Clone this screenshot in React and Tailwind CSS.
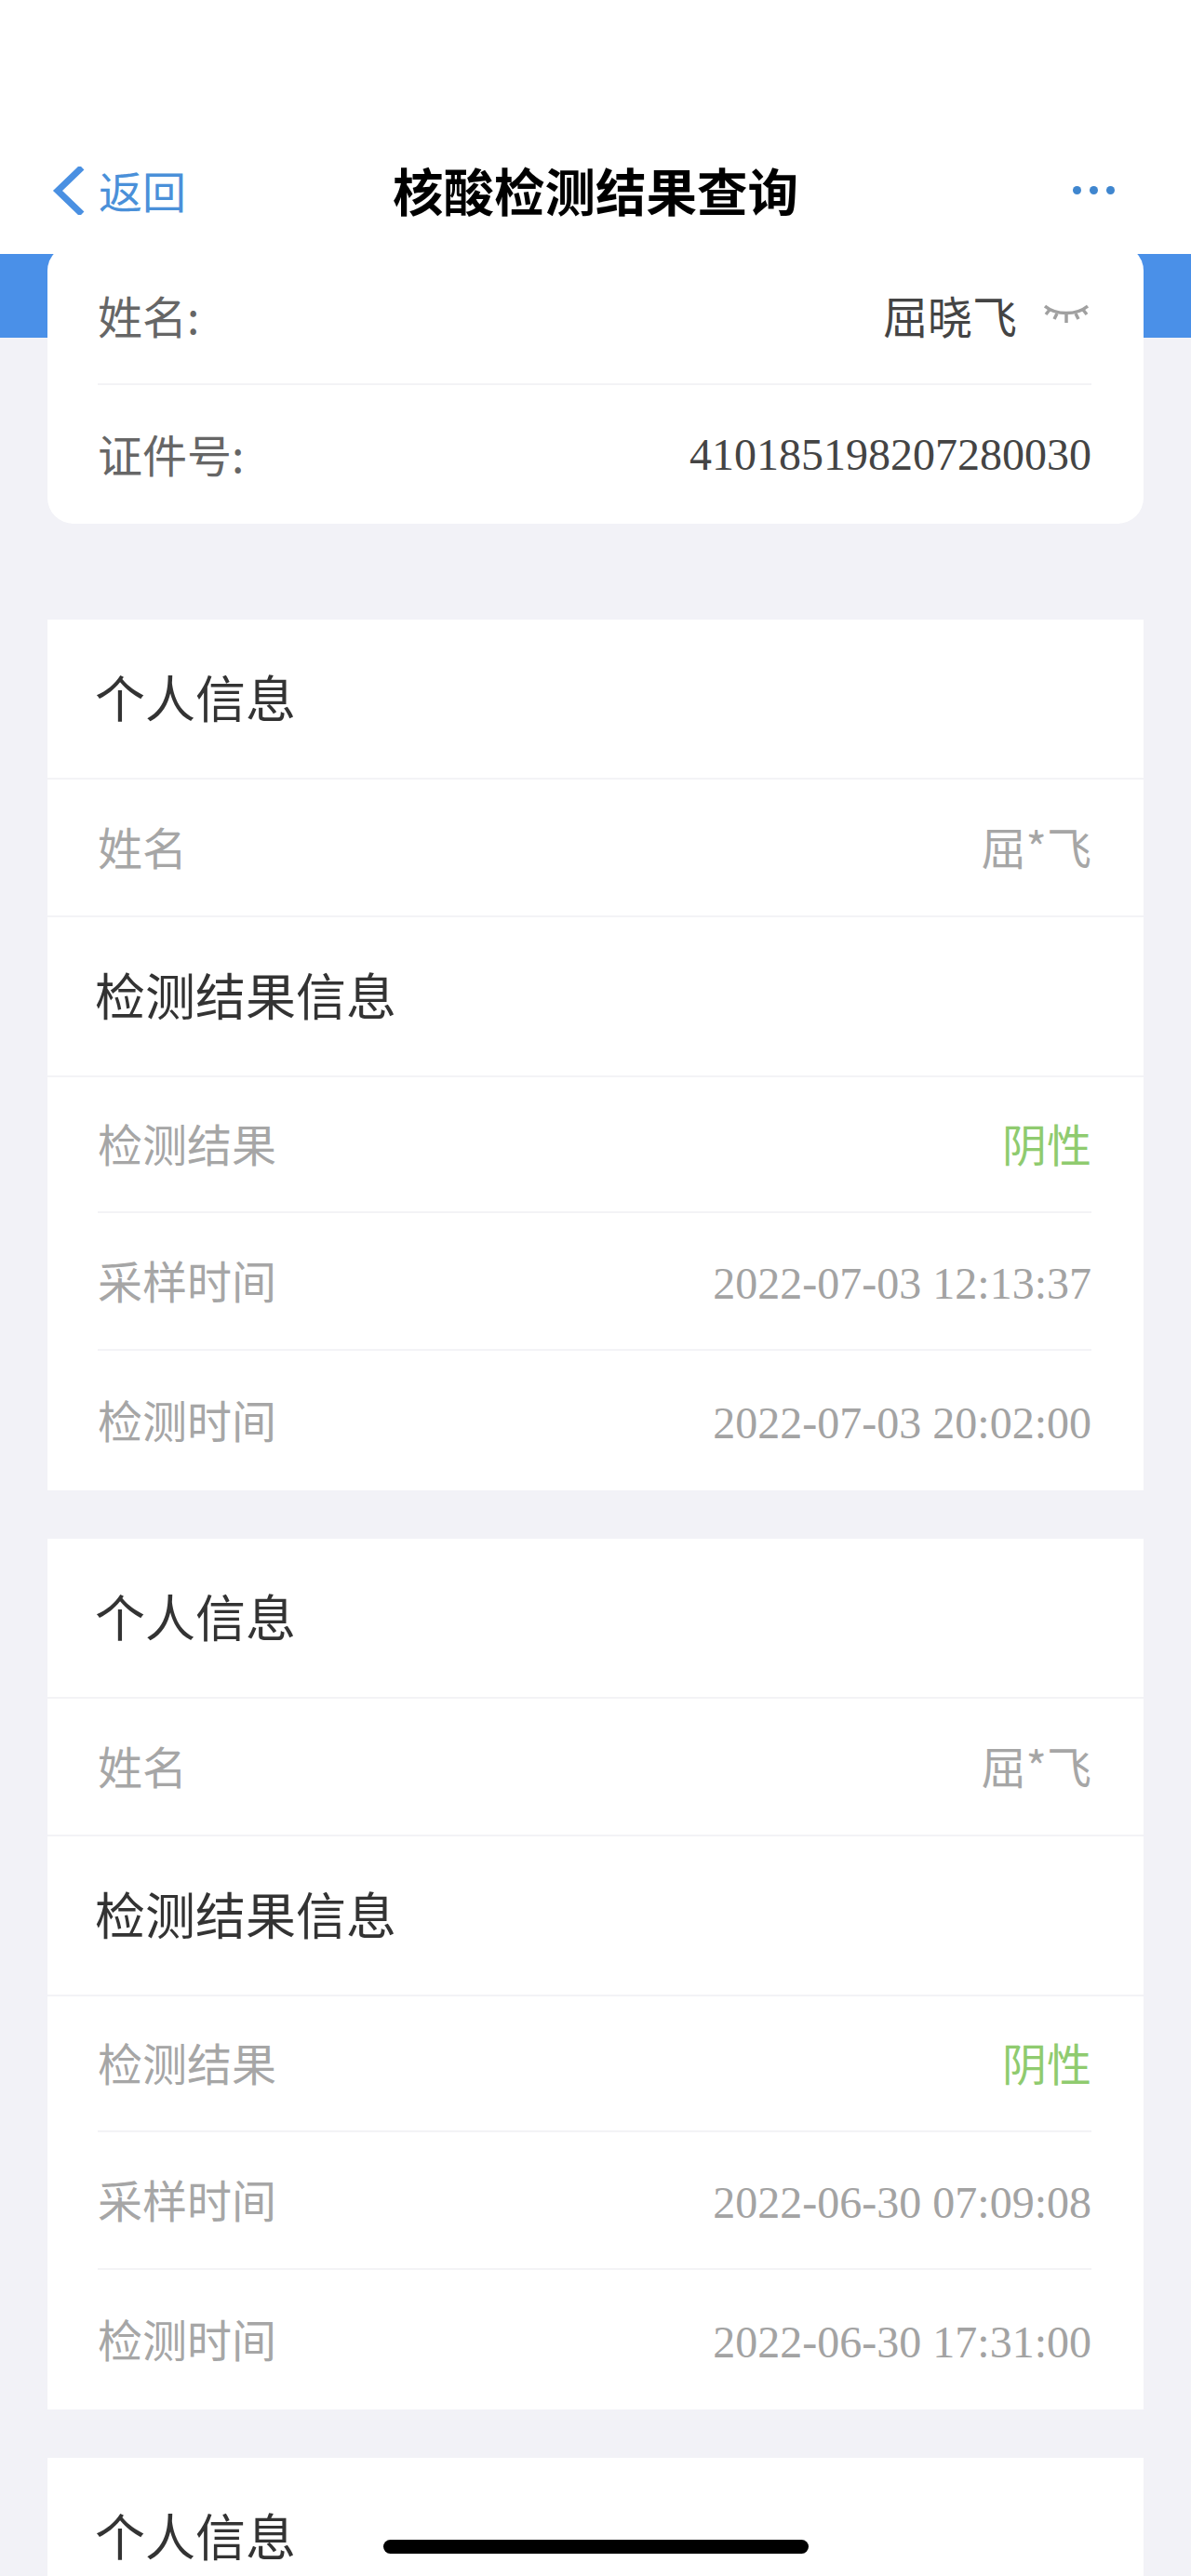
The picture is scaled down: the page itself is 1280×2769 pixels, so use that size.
const cjk = "font-['Noto_Sans_CJK_SC',sans-serif]";
const serif = "font-['Liberation_Serif',serif]";

function Row({ label, value, height, isSerif = false, valueClass = "text-[#a3a3a3]", divider = true }) {
  return (
    <div className="pl-[54px] pr-[56px]">
      <div className={`flex ${height} items-center justify-between ${divider ? "border-b-2 border-[#f3f3f6]" : ""}`}>
        <span className="pb-[5px] text-[48px] leading-none text-[#a6a6a6]">{label}</span>
        <span className={`text-[48px] leading-none ${valueClass} ${isSerif ? `pt-[5px] ${serif}` : "pb-[5px]"}`}>{value}</span>
      </div>
    </div>
  );
}

function Title({ children, height }) {
  return (
    <div className={`flex ${height} items-center border-b-2 border-[#f3f3f6] px-[51px] pb-[4px] text-[54px] leading-none text-[#333333]`}>
      {children}
    </div>
  );
}

function Section({ sample, test }) {
  return (
    <section className="mb-[52px] bg-white">
      <Title height="h-[172px]">个人信息</Title>
      <div className="flex h-[148px] items-center justify-between border-b-2 border-[#f3f3f6] pb-[5px] pl-[54px] pr-[56px] text-[48px] leading-none text-[#a6a6a6]">
        <span>姓名</span>
        <span>屈*飞</span>
      </div>
      <Title height="h-[172px]">检测结果信息</Title>
      <Row height="h-[146px]" label="检测结果" value="阴性" valueClass="text-[#8fcb6f]" />
      <Row height="h-[148px]" label="采样时间" value={sample} isSerif />
      <Row height="h-[150px]" label="检测时间" value={test} isSerif divider={false} />
    </section>
  );
}

export default function App() {
  return (
    <div className={`relative h-[2769px] overflow-hidden bg-[#f2f2f7] ${cjk}`}>
      <header className="flex h-[273px] items-center bg-white pl-[54px] pr-[82px] pt-[136px]">
        <div className="flex w-[300px] items-center text-[47px] leading-none text-[#4a90d9]">
          <svg width="38" height="52" viewBox="0 0 38 52" className="mr-[14px]" fill="none">
            <path d="M34 1 L8 26 L34 51" stroke="#4a90e2" strokeWidth="7" />
          </svg>
          <span className="pb-[3px]">返回</span>
        </div>
        <h1 className="flex-1 text-center text-[54.5px] font-bold leading-none text-black">核酸检测结果查询</h1>
        <div className="flex w-[272px] justify-end gap-[9px]">
          <span className="h-[9px] w-[9px] rounded-full bg-[#3f86cf]" />
          <span className="h-[9px] w-[9px] rounded-full bg-[#3f86cf]" />
          <span className="h-[9px] w-[9px] rounded-full bg-[#3f86cf]" />
        </div>
      </header>
      <div className="h-[90px] bg-[#4a90e8]" />
      <main className="relative z-10 -mt-[100px] px-[51px]">
        <div className="mb-[103px] rounded-[28px] bg-white pl-[54px] pr-[56px]">
          <div className="flex h-[151px] items-center justify-between border-b-2 border-[#f3f3f6]">
            <span className="text-[48px] leading-none text-[#666666]">姓名:</span>
            <div className="flex items-center">
              <span className="text-[48px] leading-none text-[#444444]">屈晓飞</span>
              <svg width="48" height="21" viewBox="0 0 48 21" className="ml-[29px] mr-[3px]" fill="none" stroke="#a0a0a0" strokeWidth="3.5">
                <path d="M1 2 C 13 12, 35 12, 47 2" />
                <path d="M6 6 L2 11 M14 10 L11 16 M24 11 V20 M34 10 L37 16 M42 6 L46 11" />
              </svg>
            </div>
          </div>
          <div className="flex h-[149px] items-center justify-between">
            <span className="pb-[3px] text-[48px] leading-none text-[#666666]">证件号:</span>
            <span className={`${serif} text-[48px] leading-none text-[#444444]`}>410185198207280030</span>
          </div>
        </div>
        <Section sample="2022-07-03 12:13:37" test="2022-07-03 20:02:00" />
        <Section sample="2022-06-30 07:09:08" test="2022-06-30 17:31:00" />
        <section className="bg-white">
          <Title height="h-[172px]">个人信息</Title>
        </section>
      </main>
      <div className="absolute left-[412px] top-[2730px] z-20 h-[15px] w-[457px] rounded-full bg-black" />
    </div>
  );
}
